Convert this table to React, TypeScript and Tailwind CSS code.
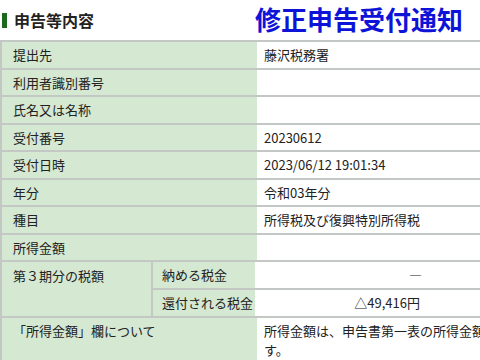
import React from "react";

const rowCls = "flex h-[27.5px] border-b-2 border-[#c4c8c4]";
const labelCls = "w-[255px] shrink-0 bg-[#d5e8d2] pl-[11px] flex items-center";
const valueCls = "flex-1 pl-[7px] flex items-center bg-white";

function Row({ label, value }: { label: string; value?: string }) {
  return (
    <div className={rowCls}>
      <div className={labelCls}>{label}</div>
      <div className={valueCls}>{value ?? ""}</div>
    </div>
  );
}

export default function App() {
  return (
    <div
      className="w-[480px] h-[360px] overflow-hidden bg-white text-[13px] text-[#222]"
      style={{ fontFamily: "'Noto Sans CJK JP', 'Noto Sans', sans-serif" }}
    >
      <div className="flex h-[40px] items-center">
        <div className="w-[255px] shrink-0 flex items-center">
          <div className="ml-[2px] w-[5px] h-[15px] bg-[#1c6a1c]" />
          <div className="ml-[7px] text-[16px] font-bold leading-[20px] text-[#222]">申告等内容</div>
        </div>
        <div className="text-[26px] font-bold leading-[30px] text-[#0d14d8] pb-[3px] whitespace-nowrap">
          修正申告受付通知
        </div>
      </div>
      <div className="w-[600px] border-t-2 border-l-2 border-[#c4c8c4]">
        <Row label="提出先" value="藤沢税務署" />
        <Row label="利用者識別番号" />
        <Row label="氏名又は名称" />
        <Row label="受付番号" value="20230612" />
        <Row label="受付日時" value="2023/06/12 19:01:34" />
        <Row label="年分" value="令和03年分" />
        <Row label="種目" value="所得税及び復興特別所得税" />
        <Row label="所得金額" />
        <div className="flex border-b-2 border-[#c4c8c4]">
          <div className="w-[151px] shrink-0 bg-[#d5e8d2] border-r-2 border-[#c4c8c4]">
            <div className="h-[27.5px] pl-[11px] flex items-center">第３期分の税額</div>
          </div>
          <div className="flex-1 flex flex-col">
            <div className="flex h-[27.5px] border-b-2 border-[#c4c8c4]">
              <div className="w-[102px] shrink-0 bg-[#d5e8d2] pl-[9px] flex items-center">納める税金</div>
              <div className="w-[167px] shrink-0 bg-white flex items-center justify-end">―</div>
              <div className="flex-1 bg-white" />
            </div>
            <div className="flex h-[26px]">
              <div className="w-[102px] shrink-0 bg-[#d5e8d2] pl-[9px] flex items-center">還付される税金</div>
              <div className="w-[165px] shrink-0 bg-white flex items-center justify-end">△49,416円</div>
              <div className="flex-1 bg-white" />
            </div>
          </div>
        </div>
        <div className="flex h-[60px]">
          <div className="w-[255px] shrink-0 bg-[#d5e8d2] pl-[11px] pt-[3px] leading-[19px]">「所得金額」欄について</div>
          <div className="flex-1 pl-[7px] pt-[3px] leading-[19px] bg-white">
            <div className="whitespace-nowrap">所得金額は、申告書第一表の所得金額欄の合計額を表示していま</div>
            <div>す。</div>
          </div>
        </div>
      </div>
    </div>
  );
}
